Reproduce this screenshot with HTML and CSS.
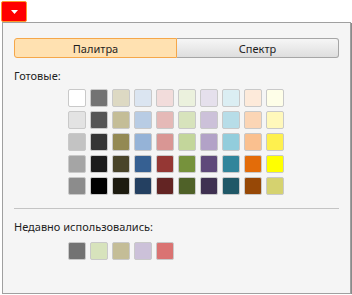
FILE: index.html
```html
<!DOCTYPE html>
<html>
<head>
<meta charset="utf-8">
<link rel="stylesheet" href="styles.css">
</head>
<body>
<div class="dropbtn"><svg width="7" height="4" viewBox="0 0 7 4"><polygon points="0,0 7,0 3.5,4" fill="#fff"/></svg></div>
<div class="panel">
  <div class="tabs">
    <div class="tab active">Палитра</div>
    <div class="tab">Спектр</div>
  </div>
  <div class="label">Готовые:</div>
  <div class="grid">
    <span class="sw" style="background:#ffffff"></span>
    <span class="sw" style="background:#737373"></span>
    <span class="sw" style="background:#ddd9c3"></span>
    <span class="sw" style="background:#dbe5f1"></span>
    <span class="sw" style="background:#f2dcdb"></span>
    <span class="sw" style="background:#ebf1dd"></span>
    <span class="sw" style="background:#e5e0ec"></span>
    <span class="sw" style="background:#dbeef3"></span>
    <span class="sw" style="background:#fdeada"></span>
    <span class="sw" style="background:#fefee8"></span>

    <span class="sw" style="background:#e3e3e3"></span>
    <span class="sw" style="background:#555555"></span>
    <span class="sw" style="background:#c4bd97"></span>
    <span class="sw" style="background:#b8cce4"></span>
    <span class="sw" style="background:#e5b9b7"></span>
    <span class="sw" style="background:#d7e3bc"></span>
    <span class="sw" style="background:#ccc1d9"></span>
    <span class="sw" style="background:#b7dde8"></span>
    <span class="sw" style="background:#fbd5b5"></span>
    <span class="sw" style="background:#fff8bb"></span>

    <span class="sw" style="background:#c3c3c3"></span>
    <span class="sw" style="background:#353535"></span>
    <span class="sw" style="background:#938953"></span>
    <span class="sw" style="background:#95b3d7"></span>
    <span class="sw" style="background:#d99694"></span>
    <span class="sw" style="background:#c3d69b"></span>
    <span class="sw" style="background:#b2a2c7"></span>
    <span class="sw" style="background:#92cddc"></span>
    <span class="sw" style="background:#fac08f"></span>
    <span class="sw" style="background:#fef04e"></span>

    <span class="sw" style="background:#a5a5a5"></span>
    <span class="sw" style="background:#1b1b1b"></span>
    <span class="sw" style="background:#494429"></span>
    <span class="sw" style="background:#366092"></span>
    <span class="sw" style="background:#953734"></span>
    <span class="sw" style="background:#76923c"></span>
    <span class="sw" style="background:#5f497a"></span>
    <span class="sw" style="background:#31859b"></span>
    <span class="sw" style="background:#e36c09"></span>
    <span class="sw" style="background:#ffff00"></span>

    <span class="sw" style="background:#8c8c8c"></span>
    <span class="sw" style="background:#000000"></span>
    <span class="sw" style="background:#1d1b10"></span>
    <span class="sw" style="background:#244061"></span>
    <span class="sw" style="background:#632423"></span>
    <span class="sw" style="background:#4f6128"></span>
    <span class="sw" style="background:#3f3151"></span>
    <span class="sw" style="background:#205867"></span>
    <span class="sw" style="background:#974806"></span>
    <span class="sw" style="background:#d5d26f"></span>
  </div>
  <div class="sep"></div>
  <div class="label recent-label">Недавно использовались:</div>
  <div class="recent">
    <span class="sw" style="background:#737373"></span>
    <span class="sw" style="background:#d7e3bc"></span>
    <span class="sw" style="background:#c4bd97"></span>
    <span class="sw" style="background:#ccc1d9"></span>
    <span class="sw" style="background:#da7372"></span>
  </div>
</div>
</body>
</html>
```

FILE: styles.css
```css
html, body {
  margin: 0;
  padding: 0;
  background: #ffffff;
}
body {
  font-family: "Noto Sans", "DejaVu Sans", sans-serif;
  font-size: 11px;
  color: #1e1e1e;
}
.dropbtn {
  margin: 1px 0 0 1px;
  width: 24px;
  height: 19px;
  background: #ff0000;
  border: 1px solid #ff9a2e;
  border-radius: 2px;
  display: flex;
  align-items: center;
  justify-content: center;
}
.dropbtn svg {
  display: block;
  margin-left: 1px;
}
.panel {
  margin-left: 2px;
  width: 325px;
  height: 270px;
  background: #f5f5f5;
  border: 1px solid #a0a0a0;
  box-shadow: 1px 1px 0 #8a8a8a;
  padding: 0 11px;
  box-sizing: content-box;
}
.tabs {
  display: flex;
  margin-top: 15px;
  height: 20px;
}
.tab {
  flex: 1;
  display: flex;
  align-items: center;
  justify-content: center;
  border: 1px solid #a6a6a6;
  border-left: none;
  border-radius: 0 3px 3px 0;
  background: linear-gradient(#f6f6f6, #dedede);
  box-sizing: border-box;
  font-size: 11px;
}
.tab.active {
  background: #ffe1b1;
  border: 1px solid #f5a74a;
  border-radius: 3px 0 0 3px;
}
.label {
  margin-top: 10px;
  height: 15px;
  line-height: 15px;
}
.grid {
  margin: 6px 0 0 54px;
  display: grid;
  grid-template-columns: repeat(10, 18px);
  grid-auto-rows: 18px;
  gap: 4px;
}
.sw {
  display: block;
  width: 18px;
  height: 18px;
  box-sizing: border-box;
  border: 1px solid #c9c9c9;
  border-radius: 2px;
}
.sep {
  margin-top: 13px;
  height: 1px;
  background: #c4c4c4;
}
.recent-label {
  margin-top: 10px;
}
.recent {
  margin: 8px 0 0 54px;
  display: flex;
  gap: 4px;
}
```
